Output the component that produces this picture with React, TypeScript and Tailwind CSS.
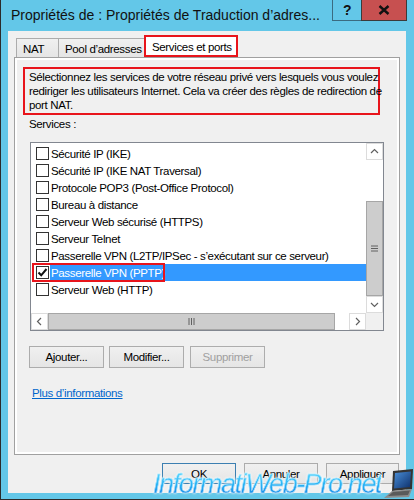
import React from "react";

const items = [
  "Sécurité IP (IKE)",
  "Sécurité IP (IKE NAT Traversal)",
  "Protocole POP3 (Post-Office Protocol)",
  "Bureau à distance",
  "Serveur Web sécurisé (HTTPS)",
  "Serveur Telnet",
  "Passerelle VPN (L2TP/IPSec - s’exécutant sur ce serveur)",
  "Passerelle VPN (PPTP)",
  "Serveur Web (HTTP)",
];

function Chevron({ dir }: { dir: "up" | "down" | "left" | "right" }) {
  const pts =
    dir === "up"
      ? "1,6 4.5,2.5 8,6"
      : dir === "down"
      ? "1,3 4.5,6.5 8,3"
      : dir === "left"
      ? "6,1 2.5,4.5 6,8"
      : "3,1 6.5,4.5 3,8";
  return (
    <svg width="9" height="9" viewBox="0 0 9 9">
      <polyline points={pts} fill="none" stroke="#606060" strokeWidth="1.2" />
    </svg>
  );
}

function Btn({
  children,
  w,
  h,
  disabled,
  focused,
}: {
  children: React.ReactNode;
  w: string;
  h: string;
  disabled?: boolean;
  focused?: boolean;
}) {
  return (
    <div
      className={[
        "flex items-center justify-center bg-gradient-to-b from-[#f0f0f0] to-[#e5e5e5] border",
        w,
        h,
        focused ? "border-[#3c7fb1]" : disabled ? "border-[#adadad]" : "border-[#acacac]",
        disabled ? "text-[#a0a0a0]" : "text-black",
      ].join(" ")}
    >
      {children}
    </div>
  );
}

export default function App() {
  return (
    <div className="relative w-[414px] h-[500px] overflow-hidden bg-[#63c7e8] border-l border-b border-[#2b2b2b] flex flex-col font-['Liberation_Sans',Arial,sans-serif] text-[11.5px] tracking-[-0.35px] leading-[14px] text-black">
      {/* Title bar */}
      <div className="h-[31px] flex items-start shrink-0">
        <div className="flex-1 pl-[10px] pt-[6px] text-[14px] tracking-[0px] leading-[18px] text-[#111] whitespace-nowrap overflow-hidden">
          Propriétés de : Propriétés de Traduction d’adres...
        </div>
        <div className="flex h-[21px] mr-[7px]">
          <div className="w-[29px] h-[21px] border border-t-0 border-r-0 border-[#3b6b80] flex items-center justify-center text-[14px] font-bold text-[#111]">
            ?
          </div>
          <div className="w-[46px] h-[21px] bg-[#c75050] border border-t-0 border-[#3b3b3b] flex items-center justify-center">
            <svg width="12" height="10" viewBox="0 0 12 10">
              <path d="M1.5 1 L10.5 9 M10.5 1 L1.5 9" stroke="#111" strokeWidth="2.4" />
            </svg>
          </div>
        </div>
      </div>

      {/* Dialog body */}
      <div className="ml-[7px] w-[398px] h-[462px] bg-[#f0f0f0] flex flex-col px-[6px] pt-[4px]">
        {/* Tabs */}
        <div className="h-[22px] flex items-end pl-[2px] shrink-0">
          <div className="w-[43px] h-[19px] border border-b-0 border-[#acacac] bg-gradient-to-b from-[#f0f0f0] to-[#e5e5e5] pl-[6px] pt-[3px]">
            NAT
          </div>
          <div className="w-[86px] h-[19px] border border-l-0 border-b-0 border-[#acacac] bg-gradient-to-b from-[#f0f0f0] to-[#e5e5e5] pl-[6px] pt-[3px] whitespace-nowrap">
            Pool d’adresses
          </div>
          <div className="-ml-px w-[94px] h-[22px] border-2 border-[#e8141b] bg-white pl-[6px] pt-[3px] whitespace-nowrap">
            Services et ports
          </div>
        </div>

        {/* Panel */}
        <div className="h-[398px] border border-[#a0a0a0] bg-white p-[2px] flex shrink-0">
          <div className="flex-1 bg-[#f0f0f0] flex flex-col">
            <div className="ml-[6px] mt-[7px] w-[357px] border-2 border-[#e8141b] pl-[4px] py-[1px] whitespace-nowrap">
              Sélectionnez les services de votre réseau privé vers lesquels vous voulez
              <br />
              rediriger les utilisateurs Internet. Cela va créer des règles de redirection de
              <br />
              port NAT.
            </div>
            <div className="ml-[12px] mt-[2px]">Services :</div>

            {/* List */}
            <div className="ml-[13px] mt-[11px] w-[354px] h-[189px] border border-[#828790] bg-white flex flex-col">
              <div className="h-[170px] flex">
                <div className="flex-1 pt-[2px] overflow-hidden">
                  {items.map((t, i) => {
                    const sel = i === 7;
                    return (
                      <div key={t} className="relative h-[17px] flex items-center pl-[5px] whitespace-nowrap">
                        <div className="w-[13px] h-[13px] border border-[#333] bg-white flex items-center justify-center shrink-0">
                          {sel && (
                            <svg width="11" height="11" viewBox="0 0 11 11">
                              <path d="M1.5 5.5 L4.2 8.3 L9.5 2" fill="none" stroke="#111" strokeWidth="2" />
                            </svg>
                          )}
                        </div>
                        <div
                          className={
                            sel
                              ? "ml-[1px] flex-1 h-[17px] bg-[#3399ff] text-white pl-[1px] flex items-center"
                              : "ml-[1px] pl-[1px]"
                          }
                        >
                          {t}
                        </div>
                        {sel && (
                          <div className="absolute left-[1px] top-[-1px] w-[133px] h-[19px] border-2 border-[#e8141b]" />
                        )}
                      </div>
                    );
                  })}
                </div>
                {/* Vertical scrollbar */}
                <div className="w-[17px] flex flex-col bg-[#f0f0f0]">
                  <div className="h-[17px] border border-[#dcdcdc] bg-white flex items-center justify-center">
                    <Chevron dir="up" />
                  </div>
                  <div className="h-[41px] bg-white" />
                  <div className="h-[95px] bg-[#cdcdcd] border border-[#a6a6a6] flex items-center justify-center">
                    <svg width="7" height="7" viewBox="0 0 7 7">
                      <path d="M0 1 H7 M0 3.5 H7 M0 6 H7" stroke="#606060" strokeWidth="1" />
                    </svg>
                  </div>
                  <div className="h-[17px] border border-[#dcdcdc] bg-white flex items-center justify-center">
                    <Chevron dir="down" />
                  </div>
                </div>
              </div>
              {/* Horizontal scrollbar */}
              <div className="h-[17px] flex">
                <div className="w-[17px] border border-[#dcdcdc] bg-white flex items-center justify-center">
                  <Chevron dir="left" />
                </div>
                <div className="w-[287px] bg-[#cdcdcd] border border-[#a6a6a6] flex items-center justify-center">
                  <svg width="7" height="7" viewBox="0 0 7 7">
                    <path d="M1 0 V7 M3.5 0 V7 M6 0 V7" stroke="#606060" strokeWidth="1" />
                  </svg>
                </div>
                <div className="flex-1 bg-white" />
                <div className="w-[17px] border border-[#dcdcdc] bg-white flex items-center justify-center">
                  <Chevron dir="right" />
                </div>
                <div className="w-[17px] bg-[#f0f0f0]" />
              </div>
            </div>

            {/* Buttons */}
            <div className="ml-[12px] mt-[15px] flex">
              <Btn w="w-[75px]" h="h-[22px]">Ajouter...</Btn>
              <div className="ml-[5px]">
                <Btn w="w-[75px]" h="h-[22px]">Modifier...</Btn>
              </div>
              <div className="ml-[6px]">
                <Btn w="w-[75px]" h="h-[22px]" disabled>
                  Supprimer
                </Btn>
              </div>
            </div>

            <div className="ml-[15px] mt-[18px] text-[#0066cc] underline">Plus d’informations</div>
          </div>
        </div>

        {/* Bottom buttons */}
        <div className="mt-[8px] flex justify-end pr-[1px]">
          <Btn w="w-[74px]" h="h-[21px]" focused>
            OK
          </Btn>
          <div className="ml-[8px]">
            <Btn w="w-[74px]" h="h-[21px]">Annuler</Btn>
          </div>
          <div className="ml-[8px]">
            <Btn w="w-[73px]" h="h-[21px]">Appliquer</Btn>
          </div>
        </div>
      </div>

      {/* Watermark */}
      <div className="absolute left-[152px] top-[469px] text-[27px] leading-[30px] italic tracking-[-1.4px] whitespace-nowrap bg-gradient-to-b from-[#66e0ff] via-[#2bb5f5] to-[#1677e0] bg-clip-text text-transparent [-webkit-text-stroke:0.5px_rgba(255,255,255,0.7)] [filter:drop-shadow(0_0_1px_rgba(255,255,255,0.9))]">
        InformatiWeb-Pro.net
      </div>
      <svg className="absolute left-[382px] top-[467px]" width="32" height="32" viewBox="0 0 32 32">
        <defs>
          <linearGradient id="scr" x1="0" y1="0" x2="1" y2="1">
            <stop offset="0" stopColor="#4a8fd8" />
            <stop offset="1" stopColor="#0d2f6b" />
          </linearGradient>
        </defs>
        <polygon points="10,4 30,2 29,22 9,24" fill="#333" />
        <polygon points="12,6 28,4.5 27,20 11,21.5" fill="url(#scr)" />
        <polygon points="9,24 29,22 26,30 1,31" fill="#8c8c8c" />
        <polygon points="10,25 27,23.5 25,28 5,29" fill="#5a5a5a" />
      </svg>
    </div>
  );
}
